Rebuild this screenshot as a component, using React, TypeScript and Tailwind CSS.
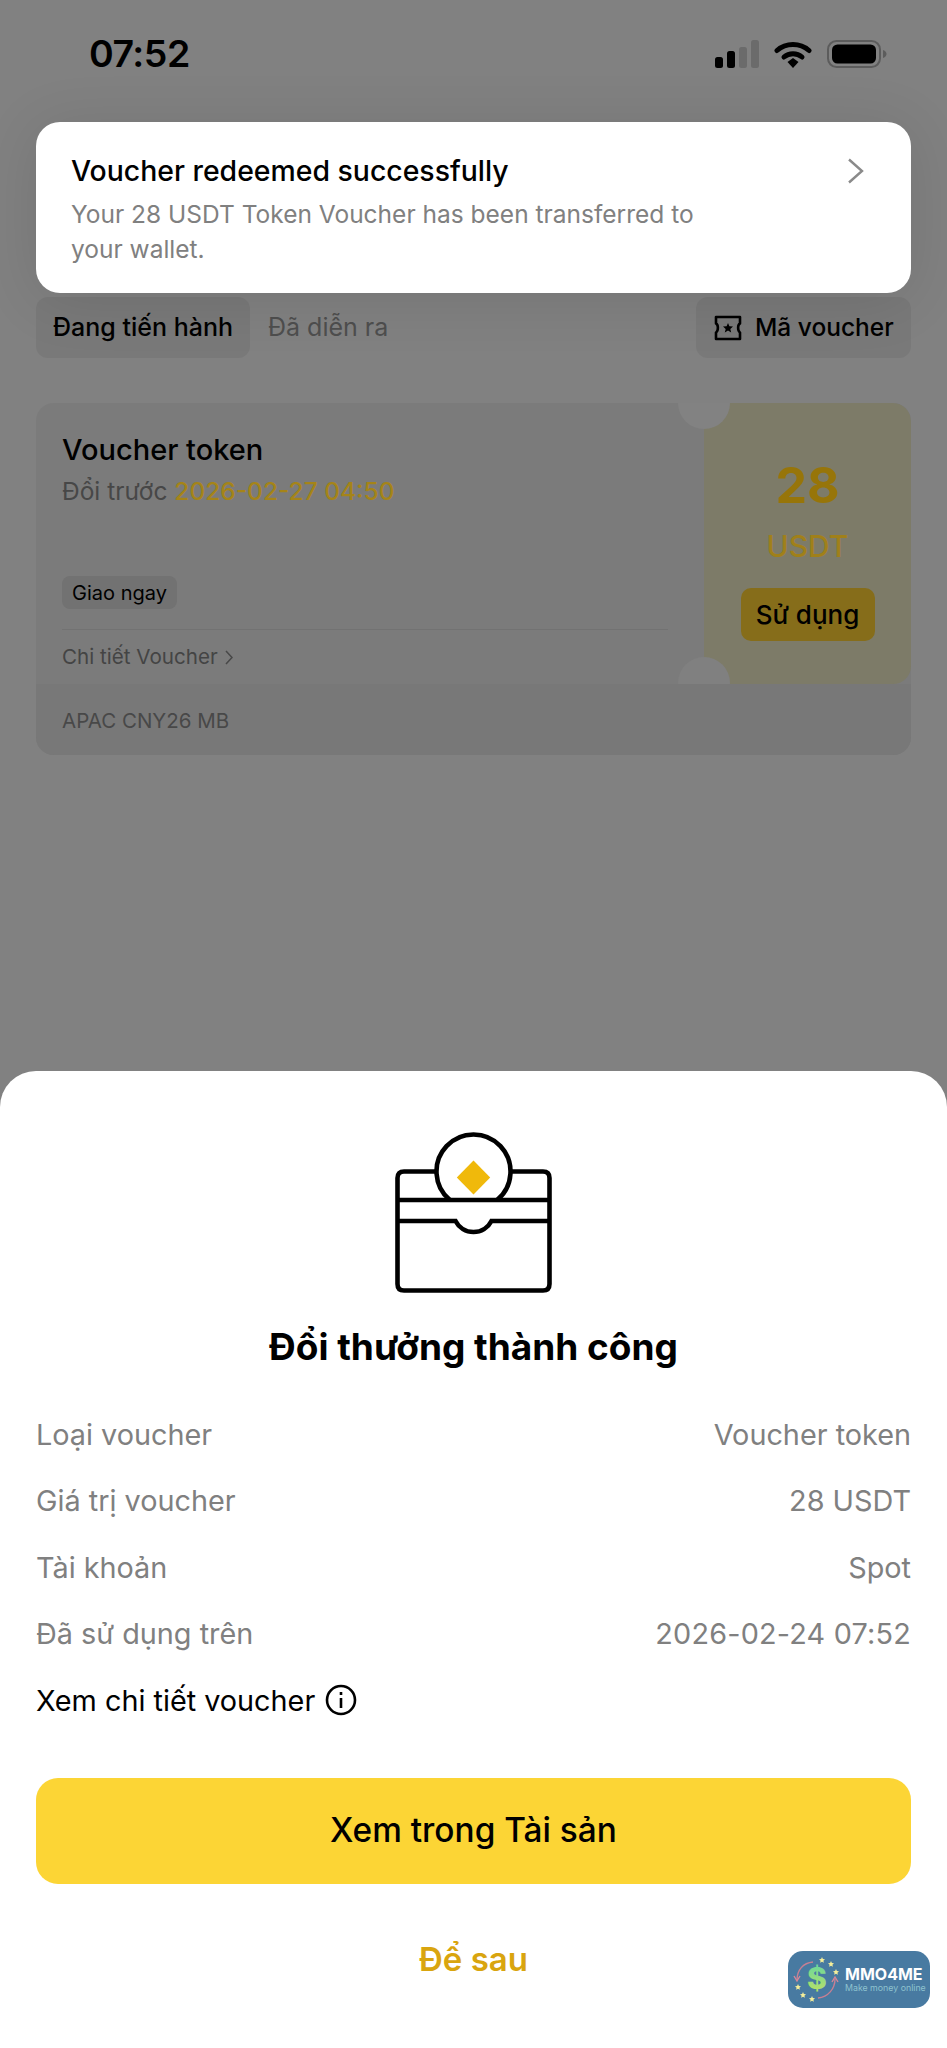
import React from "react";

function Signal() {
  return (
    <svg width="44" height="28" viewBox="0 0 44 28" className="block">
      <rect x="0" y="17" width="8" height="11" rx="2.5" fill="#000" />
      <rect x="12" y="11" width="8" height="17" rx="2.5" fill="#000" />
      <rect x="24" y="7" width="8" height="21" rx="2.5" fill="#6b6b6b" />
      <rect x="36" y="0" width="8" height="28" rx="2.5" fill="#6b6b6b" />
    </svg>
  );
}

function Wifi() {
  return (
    <svg width="38" height="28" viewBox="0 0 38 28" className="block">
      <path d="M3 10.5 C12 2.5 26 2.5 35 10.5" fill="none" stroke="#000" strokeWidth="5" strokeLinecap="round" />
      <path d="M10 17 C15 12.5 23 12.5 28 17" fill="none" stroke="#000" strokeWidth="5" strokeLinecap="round" />
      <path d="M13.5 22 L19 18 L24.5 22 L19 28 Z" fill="#000" />
    </svg>
  );
}

function Battery() {
  return (
    <svg width="60" height="28" viewBox="0 0 60 28" className="block">
      <rect x="1" y="1" width="52" height="26" rx="8.5" fill="none" stroke="#5c5c5c" strokeWidth="2" />
      <rect x="5" y="4.5" width="44" height="19" rx="5.5" fill="#000" />
      <path d="M56 10 C58.5 11 59.5 12.5 59.5 14 C59.5 15.5 58.5 17 56 18 Z" fill="#5c5c5c" />
    </svg>
  );
}

function TicketIcon() {
  return (
    <svg width="28" height="26" viewBox="0 0 28 26" className="block" fill="none" stroke="#000" strokeWidth="2.6" strokeLinejoin="round">
      <path d="M2 2 H26 V8.5 C23.5 9.5 23.5 16 26 17.5 V24 H2 V17.5 C4.5 16 4.5 9.5 2 8.5 Z" />
      <path d="M14 8 L15.4 11.3 L19 11.6 L16.3 13.9 L17.2 17.4 L14 15.6 L10.8 17.4 L11.7 13.9 L9 11.6 L12.6 11.3 Z" fill="#000" stroke="none" />
    </svg>
  );
}

function WalletIcon() {
  return (
    <svg width="157" height="161" viewBox="0 0 157 161" className="block" fill="none" stroke="#000" strokeWidth="4.6">
      <path d="M41.5 39.5 H9 Q2.5 39.5 2.5 46 V152 Q2.5 158.5 9 158.5 H148 Q154.5 158.5 154.5 152 V46 Q154.5 39.5 148 39.5 H115.5" />
      <path d="M54.9 68 A37 37 0 1 1 102.1 68" />
      <path d="M2.5 68 H154.5" />
      <path d="M2.5 89 H60.5 A20.2 20.2 0 0 0 96.5 89 H154.5" />
      <path d="M78.5 28.5 L95.2 45.5 L78.5 62.5 L61.8 45.5 Z" fill="#F0B90B" stroke="none" />
    </svg>
  );
}

function Star({ x, y }: { x: number; y: number }) {
  return (
    <path
      transform={`translate(${x} ${y})`}
      d="M0 -3 L0.9 -1 L3 -0.8 L1.4 0.7 L1.9 2.8 L0 1.7 L-1.9 2.8 L-1.4 0.7 L-3 -0.8 L-0.9 -1 Z"
      fill="#f5ee9a"
    />
  );
}

function Watermark() {
  return (
    <div className="absolute left-[788px] top-[1951px] flex h-[57px] w-[142px] items-center rounded-[15px] bg-[#487aa1]">
      <svg width="57" height="57" viewBox="0 0 57 57" className="block shrink-0">
        <defs>
          <linearGradient id="dollarFill" x1="0" y1="0" x2="0" y2="1">
            <stop offset="0" stopColor="#5fd6a4" />
            <stop offset="1" stopColor="#c3e25f" />
          </linearGradient>
        </defs>
        <path d="M25 11 C15 12 9 19 9 29" fill="none" stroke="#c77f93" strokeWidth="1.4" />
        <path d="M6 25 L9 30 L12 25" fill="none" stroke="#d88798" strokeWidth="1.4" />
        <path d="M30 47 C40 46 47 38 47 28" fill="none" stroke="#c77f93" strokeWidth="1.4" />
        <path d="M44 31 L47 26 L50 31" fill="none" stroke="#d88798" strokeWidth="1.4" />
        <text x="29" y="38" textAnchor="middle" fontSize="30" fontWeight="800" fill="url(#dollarFill)">
          $
        </text>
        <Star x={34} y={9} />
        <Star x={43} y={13} />
        <Star x={48} y={21} />
        <Star x={10} y={36} />
        <Star x={15} y={44} />
        <Star x={24} y={48} />
      </svg>
      <div className="flex flex-col pt-[2px]">
        <span className="text-[16px] leading-[15px] font-bold text-white">MMO4ME</span>
        <span className="whitespace-nowrap text-[8.8px] leading-[12px] text-[#8ec3cf]">Make money online</span>
      </div>
    </div>
  );
}

function Row({ label, value, wide }: { label: string; value: string; wide?: boolean }) {
  return (
    <div className="flex h-[66.5px] items-center justify-between text-[#808080]">
      <span>{label}</span>
      <span className={wide ? "tracking-[0.2px]" : ""}>{value}</span>
    </div>
  );
}

export default function App() {
  return (
    <div
      className="relative flex h-[2048px] w-[947px] flex-col overflow-hidden bg-[#818181] text-black"
      style={{ fontFamily: "Inter, 'Noto Sans', sans-serif" }}
    >
      <div className="flex h-[107px] shrink-0 items-start justify-between pl-[89px] pr-[60px] pt-[33px]">
        <span className="text-[37.5px] leading-[41px] font-semibold tracking-[-0.5px]">07:52</span>
        <div className="flex items-center gap-[15px] pt-[7px]">
          <Signal />
          <Wifi />
          <Battery />
        </div>
      </div>

      <div className="absolute left-[36px] top-[122px] z-10 flex h-[171px] w-[875px] justify-between rounded-[24px] bg-white pl-[35px] pr-[46px] pt-[31px] shadow-[0_6px_60px_rgba(0,0,0,0.1)]">
        <div>
          <p className="text-[28.4px] leading-[36px] font-medium">Voucher redeemed successfully</p>
          <p className="mt-[8px] w-[650px] text-[24.5px] leading-[35px] text-[#808080]">
            Your 28 USDT Token Voucher has been transferred to your wallet.
          </p>
        </div>
        <svg width="18" height="26" viewBox="0 0 18 26" className="mt-[5px] block" fill="none" stroke="#8a8a8a" strokeWidth="2.4">
          <path d="M2 1.5 L15 13 L2 24.5" />
        </svg>
      </div>

      <div className="mx-[36px] mt-[190px] flex items-center justify-between text-[25px] font-medium">
        <div className="flex items-center">
          <div className="flex h-[61px] w-[214px] items-center justify-center rounded-[12px] bg-[#797979]">Đang tiến hành</div>
          <span className="ml-[18px] font-normal text-[#4e4e4e]">Đã diễn ra</span>
        </div>
        <div className="flex h-[61px] w-[215px] items-center gap-[13px] rounded-[12px] bg-[#797979] pl-[18px]">
          <TicketIcon />
          <span className="text-[24.5px]">Mã voucher</span>
        </div>
      </div>

      <div className="relative mx-[36px] mt-[45px] h-[352px] overflow-hidden rounded-[18px] bg-[#7b7b7b]">
        <div className="flex h-[281px]">
          <div className="w-[668px] shrink-0 pl-[26px]">
            <p className="pt-[28px] text-[29px] leading-[38px] font-medium">Voucher token</p>
            <p className="mt-[3px] text-[24.5px] leading-[38px] text-[#474747]">
              Đổi trước <span className="font-medium text-[#a58418]">2026-02-27 04:50</span>
            </p>
            <span className="mt-[66px] flex h-[33px] w-[115px] items-center justify-center rounded-[8px] bg-[#727272] text-[20px]">
              Giao ngay
            </span>
            <div className="mt-[20px] w-[606px] border-t border-[#727272]" />
            <p className="mt-[14px] flex items-center gap-[7px] text-[20.6px] leading-[26px] text-[#444444]">
              Chi tiết Voucher
              <svg width="8" height="15" viewBox="0 0 8 15" fill="none" stroke="#484848" strokeWidth="1.5">
                <path d="M1 1 L7 7.5 L1 14" />
              </svg>
            </p>
          </div>
          <div className="flex w-[207px] flex-col items-center rounded-tr-[18px] rounded-br-[18px] bg-[#7d7b68]">
            <span className="pt-[56px] text-[50px] leading-[52px] font-bold text-[#977509]">28</span>
            <span className="mt-[17px] text-[30px] leading-[36px] font-medium text-[#a0801a]">USDT</span>
            <span className="mt-[24px] flex h-[53px] w-[134px] items-center justify-center rounded-[10px] bg-[#866d1a] text-[26px] font-medium">
              Sử dụng
            </span>
          </div>
        </div>
        <div className="absolute left-[642px] top-[-26px] h-[52px] w-[52px] rounded-full bg-[#828282]" />
        <div className="absolute left-[642px] top-[254px] h-[52px] w-[52px] rounded-full bg-[#808080]" />
        <p className="relative h-[71px] bg-[#787878] pl-[26px] pt-[22px] text-[20.5px] leading-[30px] text-[#484848]">APAC CNY26 MB</p>
      </div>

      <div className="mt-auto flex h-[977px] shrink-0 flex-col items-center rounded-t-[36px] bg-white px-[36px] pt-[61px]">
        <WalletIcon />
        <h1 className="mt-[32px] text-[37px] leading-[44px] font-bold">Đổi thưởng thành công</h1>
        <div className="mt-[32px] w-full text-[28.8px]">
          <Row label="Loại voucher" value="Voucher token" />
          <Row label="Giá trị voucher" value="28 USDT" />
          <Row label="Tài khoản" value="Spot" />
          <Row label="Đã sử dụng trên" value="2026-02-24 07:52" wide />
          <div className="flex h-[66.5px] items-center gap-[10px]">
            <span>Xem chi tiết voucher</span>
            <svg width="32" height="32" viewBox="0 0 32 32" fill="none" stroke="#000" strokeWidth="2.6">
              <circle cx="16" cy="16" r="14" />
              <path d="M16 14 V24" />
              <path d="M16 8 V11" />
            </svg>
          </div>
        </div>
        <button className="mt-[44px] h-[106px] w-full rounded-[22px] bg-[#fcd535] text-[33.4px] font-medium">Xem trong Tài sản</button>
        <span className="mt-[54px] text-[33px] leading-[42px] font-semibold text-[#d9a50f]">Để sau</span>
      </div>

      <Watermark />
    </div>
  );
}
